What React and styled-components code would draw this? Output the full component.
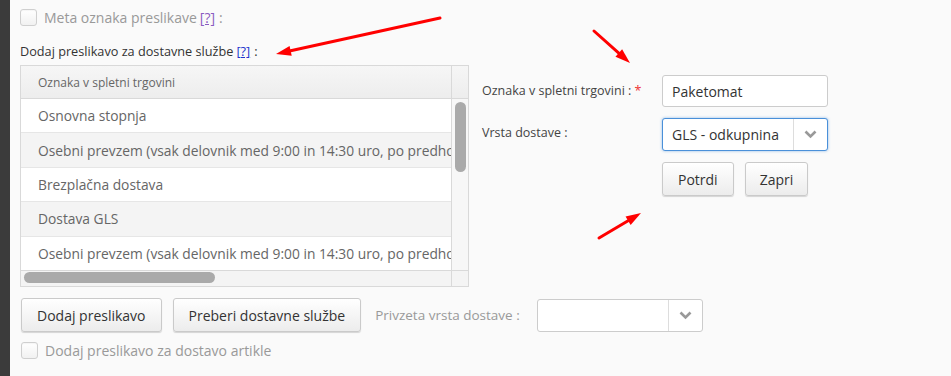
import React from 'react';
import styled, { createGlobalStyle } from 'styled-components';

const GlobalStyle = createGlobalStyle`
  html, body {
    margin: 0;
    padding: 0;
    background: #fafafa;
    font-family: "Open Sans", "DejaVu Sans", sans-serif;
  }
`;

const Page = styled.div`
  position: relative;
  display: flex;
  width: 951px;
  height: 376px;
  overflow: hidden;
  background: #fafafa;
`;

const SideStrip = styled.div`
  width: 10px;
  flex-shrink: 0;
  background: #3b3b3b;
`;

const Content = styled.div`
  flex: 1;
  padding: 9px 0 0 10px;
  display: flex;
  flex-direction: column;
`;

const CheckRow = styled.label`
  display: flex;
  align-items: center;
  gap: 7px;
  height: 16px;
  font-size: 14px;
  color: #999;
  margin-left: ${(p) => p.$indent || 0}px;
  margin-top: ${(p) => p.$mt || 0}px;
`;

const CheckBox = styled.span`
  width: 15px;
  height: 15px;
  border: 1px solid #cfcfcf;
  border-radius: 3px;
  background: linear-gradient(#ffffff, #f1f1f1);
  box-shadow: inset 0 1px 1px rgba(0, 0, 0, 0.04);
`;

const Help = styled.a`
  color: ${(p) => p.$color};
  text-decoration: underline;
  margin: 0 4px 0 3px;
`;

const SectionLabel = styled.div`
  margin-top: 18px;
  font-size: 12.7px;
  color: #333;
  height: 17px;
  line-height: 17px;
`;

const Main = styled.div`
  display: flex;
  margin-top: 5px;
  gap: 13px;
`;

const TableBox = styled.div`
  width: 447px;
  height: 220px;
  border: 1px solid #d9d9d9;
  display: grid;
  grid-template-columns: 1fr 16px;
  grid-template-rows: 33px 1fr 16px;
  background: #f7f7f7;
`;

const HeaderCell = styled.div`
  background: linear-gradient(#f6f6f6, #ededed);
  border-bottom: 1px solid #d9d9d9;
  border-right: ${(p) => (p.$corner ? 'none' : '1px solid #d9d9d9')};
  font-size: 12px;
  color: #666;
  display: flex;
  align-items: center;
  padding-left: ${(p) => (p.$corner ? 0 : 17)}px;
`;

const Rows = styled.div`
  display: flex;
  flex-direction: column;
  overflow: hidden;
  border-right: 1px solid #d9d9d9;
`;

const Row = styled.div`
  flex: 1;
  display: flex;
  align-items: center;
  padding-left: 17px;
  white-space: nowrap;
  overflow: hidden;
  font-size: 13.8px;
  color: #666;
  background: ${(p) => (p.$alt ? '#f4f4f4' : '#ffffff')};
  border-bottom: ${(p) => (p.$last ? 'none' : '1px solid #e6e6e6')};
`;

const VTrack = styled.div`
  background: #f7f7f7;
  padding: 3px 2px 0 3px;
`;

const VThumb = styled.div`
  height: 70px;
  border-radius: 6px;
  background: #aaaaaa;
`;

const HTrack = styled.div`
  border-top: 1px solid #d9d9d9;
  border-right: 1px solid #d9d9d9;
  background: #f4f4f4;
  padding: 1px 0 0 3px;
`;

const HThumb = styled.div`
  width: 191px;
  height: 11px;
  border-radius: 6px;
  background: #aaaaaa;
`;

const Corner = styled.div`
  border-top: 1px solid #d9d9d9;
  background: #f4f4f4;
`;

const FormPanel = styled.div`
  padding-top: 10px;
  display: grid;
  grid-template-columns: 180px 166px;
  row-gap: 11px;
  align-items: center;
  align-content: start;
`;

const FieldLabel = styled.div`
  font-size: 12.5px;
  color: #444;
  padding-bottom: ${(p) => p.$pb || 0}px;
`;

const Required = styled.span`
  color: #e33;
  margin-left: 3px;
`;

const TextInput = styled.div`
  height: 30px;
  border: 1px solid #ccc;
  border-radius: 3px;
  background: #fff;
  display: flex;
  align-items: center;
  padding-left: 9px;
  font-size: 14px;
  color: #333;
`;

const Select = styled.div`
  height: ${(p) => p.$h || 31}px;
  width: ${(p) => p.$w || 166}px;
  box-sizing: border-box;
  border: 1px solid ${(p) => (p.$focus ? '#4a90d9' : '#ccc')};
  box-shadow: ${(p) => (p.$focus ? '0 0 3px rgba(74, 144, 217, 0.6)' : 'none')};
  border-radius: 3px;
  background: #fff;
  display: flex;
  align-items: center;
  font-size: 14px;
  color: #333;
`;

const SelectValue = styled.div`
  flex: 1;
  padding-left: 9px;
  white-space: nowrap;
`;

const SelectArrow = styled.div`
  width: 33px;
  height: 100%;
  border-left: 1px solid #ddd;
  display: flex;
  align-items: center;
  justify-content: center;
`;

const Buttons = styled.div`
  display: flex;
  gap: 11px;
`;

const Button = styled.button`
  height: 34px;
  padding: 0 ${(p) => p.$pad || 15}px;
  border: 1px solid #cacaca;
  border-radius: 3px;
  background: linear-gradient(#ffffff, #ececec);
  box-shadow: 0 1px 1px rgba(0, 0, 0, 0.15);
  font-family: inherit;
  font-size: 14px;
  color: #333;
`;

const ActionRow = styled.div`
  display: flex;
  align-items: center;
  gap: 11px;
  margin-top: 11px;
  margin-left: 1px;
`;

const MutedLabel = styled.span`
  font-size: 13.5px;
  color: #999;
  margin-left: 3px;
  margin-right: 6px;
`;

const Annotations = styled.svg`
  position: absolute;
  left: 0;
  top: 0;
  pointer-events: none;
`;

const Chevron = () => (
  <svg width="13" height="9" viewBox="0 0 13 9">
    <path d="M1.5 1.5 L6.5 6.5 L11.5 1.5" fill="none" stroke="#999" strokeWidth="2.6" />
  </svg>
);

const Arrow = ({ x1, y1, x2, y2 }) => {
  const a = Math.atan2(y2 - y1, x2 - x1);
  const len = 15;
  const w = 5;
  const bx = x2 - len * Math.cos(a);
  const by = y2 - len * Math.sin(a);
  const px = -Math.sin(a) * w;
  const py = Math.cos(a) * w;
  return (
    <g>
      <line x1={x1} y1={y1} x2={bx} y2={by} stroke="#f00" strokeWidth="3" strokeLinecap="round" />
      <polygon points={`${x2},${y2} ${bx + px},${by + py} ${bx - px},${by - py}`} fill="#f00" />
    </g>
  );
};

const rows = [
  'Osnovna stopnja',
  'Osebni prevzem (vsak delovnik med 9:00 in 14:30 uro, po predhodnem dogovoru)',
  'Brezplačna dostava',
  'Dostava GLS',
  'Osebni prevzem (vsak delovnik med 9:00 in 14:30 uro, po predhodnem dogovoru)',
];

const App = () => (
  <Page>
    <GlobalStyle />
    <SideStrip />
    <Content>
      <CheckRow>
        <CheckBox />
        <span>
          Meta oznaka preslikave<Help $color="#8a5cc0">[?]</Help>:
        </span>
      </CheckRow>

      <SectionLabel>
        Dodaj preslikavo za dostavne službe<Help $color="#2233cc">[?]</Help>:
      </SectionLabel>

      <Main>
        <TableBox>
          <HeaderCell>Oznaka v spletni trgovini</HeaderCell>
          <HeaderCell $corner />
          <Rows>
            {rows.map((r, i) => (
              <Row key={i} $alt={i % 2 === 1} $last={i === rows.length - 1}>
                {r}
              </Row>
            ))}
          </Rows>
          <VTrack>
            <VThumb />
          </VTrack>
          <HTrack>
            <HThumb />
          </HTrack>
          <Corner />
        </TableBox>

        <FormPanel>
          <FieldLabel $pb={2}>
            Oznaka v spletni trgovini :<Required>*</Required>
          </FieldLabel>
          <TextInput>Paketomat</TextInput>
          <FieldLabel $pb={4}>Vrsta dostave :</FieldLabel>
          <Select $focus $h={33}>
            <SelectValue>GLS - odkupnina</SelectValue>
            <SelectArrow>
              <Chevron />
            </SelectArrow>
          </Select>
          <div />
          <Buttons>
            <Button $pad={15}>Potrdi</Button>
            <Button $pad={14}>Zapri</Button>
          </Buttons>
        </FormPanel>
      </Main>

      <ActionRow>
        <Button>Dodaj preslikavo</Button>
        <Button>Preberi dostavne službe</Button>
        <MutedLabel>Privzeta vrsta dostave :</MutedLabel>
        <Select $h={33}>
          <SelectValue />
          <SelectArrow>
            <Chevron />
          </SelectArrow>
        </Select>
      </ActionRow>

      <CheckRow $indent={1} $mt={10}>
        <CheckBox />
        <span>Dodaj preslikavo za dostavo artikle</span>
      </CheckRow>
    </Content>

    <Annotations width="951" height="376">
      <Arrow x1={440} y1={18} x2={276} y2={54} />
      <Arrow x1={594} y1={31} x2={630} y2={63} />
      <Arrow x1={599} y1={238} x2={641} y2={213} />
    </Annotations>
  </Page>
);

export default App;
